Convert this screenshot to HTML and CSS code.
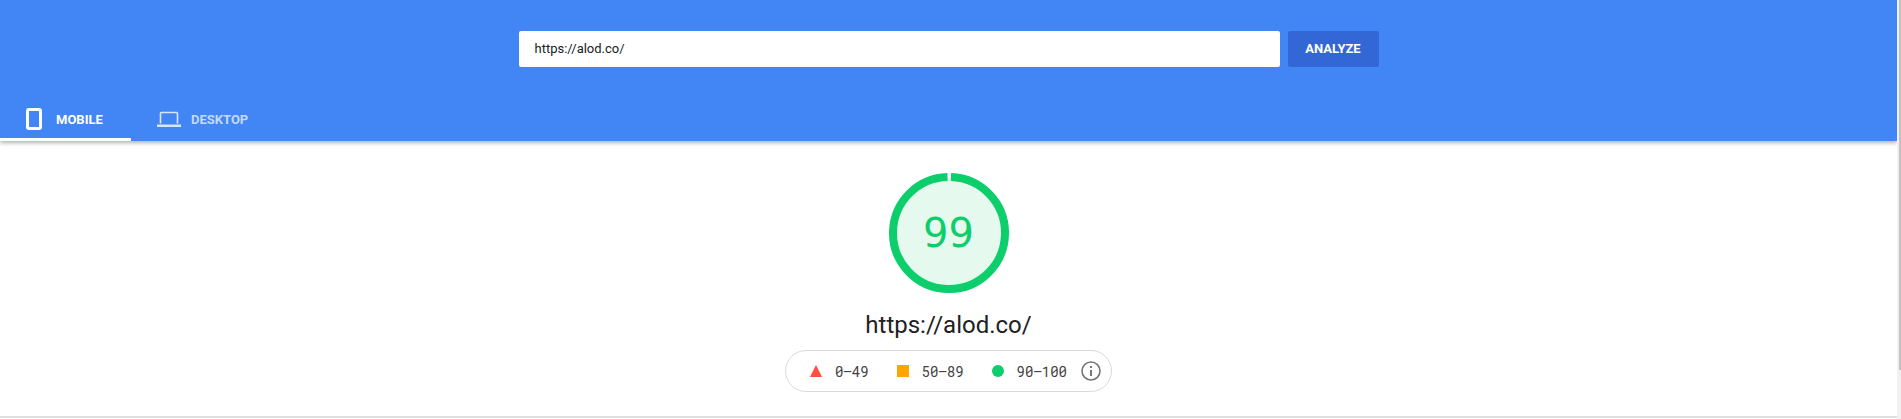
FILE: index.html
```html
<!DOCTYPE html>
<html lang="en">
<head>
    <meta charset="UTF-8">
    <title>PageSpeed Insights</title>
    <link rel="stylesheet" href="styles.css">
</head>
<body>
    <div class="page">
        <div class="content">
            <div class="header">
                <div class="url-form">
                    <div class="url-input">https://alod.co/</div>
                    <div class="analyze-btn">ANALYZE</div>
                </div>
                <div class="tabs">
                    <div class="tab tab-active">
                        <svg class="tab-icon-mobile" width="16" height="22" viewBox="0 0 16 22">
                            <rect x="1.5" y="1.5" width="13" height="19" rx="1.5" fill="none" stroke="#fff" stroke-width="3"/>
                        </svg>
                        <span>MOBILE</span>
                    </div>
                    <div class="tab">
                        <svg class="tab-icon-desktop" width="24" height="16" viewBox="0 0 24 16">
                            <path d="M3.5 12.5V2.5a1 1 0 0 1 1-1h15a1 1 0 0 1 1 1v10" fill="none" stroke="currentColor" stroke-width="1.6"/>
                            <path d="M0 13.5h24V16H0z" fill="currentColor"/>
                        </svg>
                        <span>DESKTOP</span>
                    </div>
                </div>
            </div>

            <div class="report">
                <div class="gauge">
                    <svg width="120" height="120" viewBox="0 0 120 120">
                        <circle cx="60" cy="60" r="56" fill="#e6f9ef"/>
                        <circle class="gauge-arc" cx="60" cy="60" r="56" pathLength="100" stroke-dasharray="99 1" transform="rotate(-88 60 60)"/>
                    </svg>
                    <div class="gauge-score">99</div>
                </div>
                <div class="report-url">https://alod.co/</div>
                <div class="legend">
                    <div class="legend-item">
                        <svg width="12" height="12" viewBox="0 0 12 12"><path d="M6 0l6 12H0z" fill="#ff4e42"/></svg>
                        <span>0–49</span>
                    </div>
                    <div class="legend-item">
                        <svg width="12" height="12" viewBox="0 0 12 12"><path d="M0 0h12v12H0z" fill="#ffa400"/></svg>
                        <span>50–89</span>
                    </div>
                    <div class="legend-item">
                        <svg width="12" height="12" viewBox="0 0 12 12"><circle cx="6" cy="6" r="6" fill="#0cce6b"/></svg>
                        <span>90–100</span>
                    </div>
                    <svg class="legend-info" width="20" height="20" viewBox="0 0 20 20">
                        <circle cx="10" cy="10" r="9" fill="none" stroke="#757575" stroke-width="1.6"/>
                        <path d="M9 9h2v6H9zM9 5h2v2H9z" fill="#757575"/>
                    </svg>
                </div>
            </div>
            <div class="divider"></div>
        </div>
        <div class="scrollbar"><div class="scrollbar-thumb"></div></div>
    </div>
</body>
</html>
```

FILE: styles.css
```css
html, body {
    margin: 0;
    height: 100%;
    overflow: hidden;
}

body {
    font-family: Roboto, sans-serif;
    color: #212121;
    background-color: #fff;
}

.page {
    display: flex;
    height: 419px;
}

.content {
    flex: 1;
    min-width: 0;
}

.header {
    height: 141px;
    background-color: #4285f4;
    box-shadow: 0 2px 4px rgba(0,0,0,0.3);
}

.url-form {
    display: flex;
    justify-content: center;
    gap: 8px;
    padding-top: 31px;
    padding-right: 0;
    height: 36px;
    margin-bottom: 33px;
}

.url-input {
    width: 745px;
    height: 36px;
    padding-left: 16px;
    line-height: 36px;
    font-size: 13px;
    color: #212121;
    background-color: #fff;
    border-radius: 2px;
}

.analyze-btn {
    width: 91px;
    height: 36px;
    line-height: 36px;
    text-align: center;
    font-size: 13px;
    font-weight: 700;
    color: #fff;
    background-color: #3367d6;
    border-radius: 2px;
}

.tabs {
    display: flex;
}

.tab {
    display: flex;
    align-items: center;
    height: 38px;
    padding-bottom: 3px;
    font-size: 13px;
    font-weight: 700;
    color: rgba(255,255,255,0.7);
}

.tab:first-child {
    width: 131px;
}

.tab-active {
    color: #fff;
    box-shadow: inset 0 -3px 0 #fff;
    padding-bottom: 3px;
}

.tab-icon-mobile {
    margin: 0 14px 0 26px;
}

.tab-icon-desktop {
    margin: 0 10px 0 26px;
    color: #d9e7fd;
}

.report {
    display: flex;
    flex-direction: column;
    align-items: center;
    padding-top: 32px;
}

.gauge {
    position: relative;
    width: 120px;
    height: 120px;
}

.gauge svg {
    display: block;
}

.gauge-arc {
    fill: none;
    stroke: #0cce6b;
    stroke-width: 8;
}

.gauge-score {
    position: absolute;
    top: 0;
    left: 0;
    width: 100%;
    line-height: 120px;
    text-align: center;
    font-family: "DejaVu Sans", sans-serif;
    font-size: 40px;
    color: #0cce6b;
}

.report-url {
    margin-top: 18px;
    font-size: 24px;
    line-height: 28px;
}

.legend {
    display: flex;
    align-items: center;
    box-sizing: border-box;
    height: 42px;
    margin-top: 11px;
    padding: 0 10px 0 24px;
    border: 1px solid #dadada;
    border-radius: 21px;
    font-family: "Roboto Mono", "DejaVu Sans Mono", monospace;
    font-size: 14px;
    color: #424242;
}

.legend-item {
    display: flex;
    align-items: center;
    gap: 13px;
    margin-right: 28px;
}

.legend-item:nth-child(3) {
    margin-right: 14px;
}

.divider {
    height: 2px;
    margin-top: 24px;
    background-color: #e0e0e0;
}

.scrollbar {
    width: 4px;
    background-color: #f1f1f1;
}

.scrollbar-thumb {
    width: 2px;
    height: 370px;
    margin-left: 2px;
    background-color: #c1c1c1;
}
```
